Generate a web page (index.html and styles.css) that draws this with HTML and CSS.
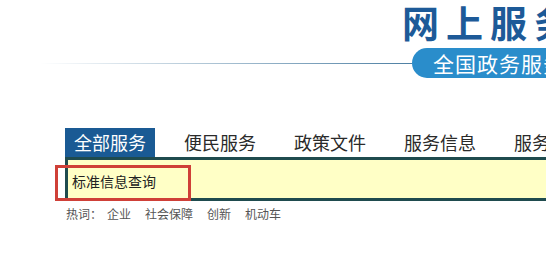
FILE: index.html
```html
<!DOCTYPE html>
<html lang="zh-CN">
<head>
<meta charset="utf-8">
<link rel="stylesheet" href="styles.css">
</head>
<body>
<div class="page">
  <header class="header">
    <div class="title">网上服务</div>
    <div class="sub-row">
      <div class="rule"></div>
      <div class="pill">全国政务服务</div>
    </div>
  </header>
  <nav class="nav">
    <span class="nav-item active">全部服务</span>
    <span class="nav-item">便民服务</span>
    <span class="nav-item">政策文件</span>
    <span class="nav-item">服务信息</span>
    <span class="nav-item">服务</span>
  </nav>
  <div class="search">
    <span class="search-text">标准信息查询</span>
    <div class="mark"></div>
  </div>
  <div class="hot">
    <span class="hot-label">热词：</span><span class="hot-word first">企业</span><span class="hot-word">社会保障</span><span class="hot-word">创新</span><span class="hot-word">机动车</span>
  </div>
</div>
</body>
</html>
```

FILE: styles.css
```css
html, body {
  margin: 0;
  padding: 0;
  overflow: hidden;
  background: #ffffff;
}
body {
  font-family: "Noto Sans CJK SC", "Noto Sans", sans-serif;
  width: 546px;
  height: 274px;
}
.page {
  width: 546px;
  white-space: nowrap;
}
.header {
  padding-top: 2px;
}
.title {
  padding-left: 402px;
  font-size: 37px;
  line-height: 40px;
  font-weight: 700;
  letter-spacing: 7px;
  color: #1d5a98;
}
.sub-row {
  display: flex;
  align-items: center;
  margin-top: 6px;
  height: 30px;
}
.rule {
  flex: none;
  margin-left: 40px;
  width: 372px;
  height: 1px;
  background: linear-gradient(to right, rgba(90,130,165,0), #4d7fa3);
}
.pill {
  flex: none;
  height: 30px;
  line-height: 30px;
  padding-left: 21px;
  width: 200px;
  border-radius: 15px 0 0 15px;
  background: #2a8dcb;
  color: #ffffff;
  font-size: 21px;
  letter-spacing: 1px;
}
.nav {
  display: flex;
  margin-top: 50px;
  margin-left: 65px;
  height: 29px;
}
.nav-item {
  flex: none;
  padding: 0 9px;
  margin-right: 20px;
  font-size: 18px;
  line-height: 29px;
  color: #2a2a2a;
}
.nav-item.active {
  background: #1a5a94;
  color: #ffffff;
}
.search {
  position: relative;
  margin-left: 65px;
  background: #ffffc6;
  border-top: 3px solid #1f4b4e;
  border-bottom: 3px solid #1f4b4e;
  border-left: 3px solid #1f4b4e;
  display: flex;
  align-items: center;
  padding-left: 4px;
  padding-top: 4px;
  height: 34px;
}
.search-text {
  font-size: 14px;
  color: #222222;
}
.mark {
  position: absolute;
  left: -13px;
  top: 5px;
  width: 130px;
  height: 30px;
  border: 3px solid #cf4038;
}
.hot {
  margin-top: 3px;
  margin-left: 66px;
  font-size: 12px;
  line-height: 20px;
  color: #555555;
}
.hot-word {
  margin-left: 14px;
}
.hot-word.first {
  margin-left: 5px;
}
```
